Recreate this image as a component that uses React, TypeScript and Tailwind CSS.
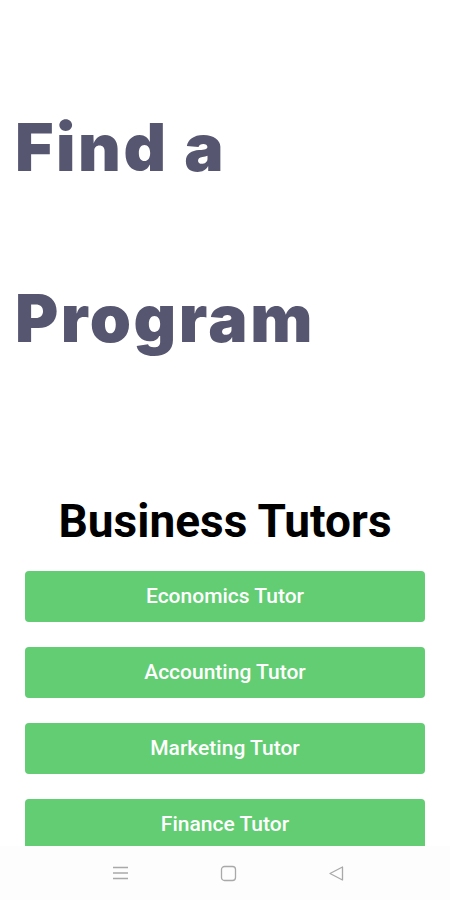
export default function App() {
  const items = ["Economics Tutor", "Accounting Tutor", "Marketing Tutor", "Finance Tutor"];
  return (
    <div className="flex h-[900px] w-[450px] flex-col overflow-hidden bg-white">
      <div className="flex-1 overflow-hidden">
        <h1
          className="ml-[15px] mt-[62px] w-[400px] text-[66px] font-black leading-[171px] tracking-[2.5px] text-[#565671]"
          style={{ fontFamily: "Inter, 'Noto Sans', sans-serif" }}
        >
          Find a Program
        </h1>
        <h2
          className="mt-[91px] text-center text-[46px] font-bold leading-[53px] text-black"
          style={{ fontFamily: "Roboto, 'Liberation Sans', sans-serif" }}
        >
          Business Tutors
        </h2>
        <div className="mt-[23px] flex flex-col gap-[25px] px-[25px]">
          {items.map((t) => (
            <div
              key={t}
              className="flex h-[51px] items-center justify-center rounded-[4px] bg-[#62cd72] text-[21px] font-medium text-white"
              style={{ fontFamily: "Roboto, 'Liberation Sans', sans-serif" }}
            >
              {t}
            </div>
          ))}
        </div>
      </div>
      <div className="flex h-[54px] shrink-0 items-center justify-center gap-[91px] bg-[#fdfdfd] pl-[6px]">
        <svg width="17" height="16" viewBox="0 0 17 16" fill="none" stroke="#a9a9a9" strokeWidth="1.3">
          <path d="M1 2.5h15M1 8h15M1 13.5h15" />
        </svg>
        <svg width="17" height="17" viewBox="0 0 17 17" fill="none" stroke="#a9a9a9" strokeWidth="1.3">
          <rect x="1.5" y="1.5" width="14" height="14" rx="3" />
        </svg>
        <svg width="17" height="17" viewBox="0 0 17 17" fill="none" stroke="#a9a9a9" strokeWidth="1.3" strokeLinejoin="round">
          <path d="M14.5 2 L2 8.5 L14.5 15 Z" />
        </svg>
      </div>
    </div>
  );
}
